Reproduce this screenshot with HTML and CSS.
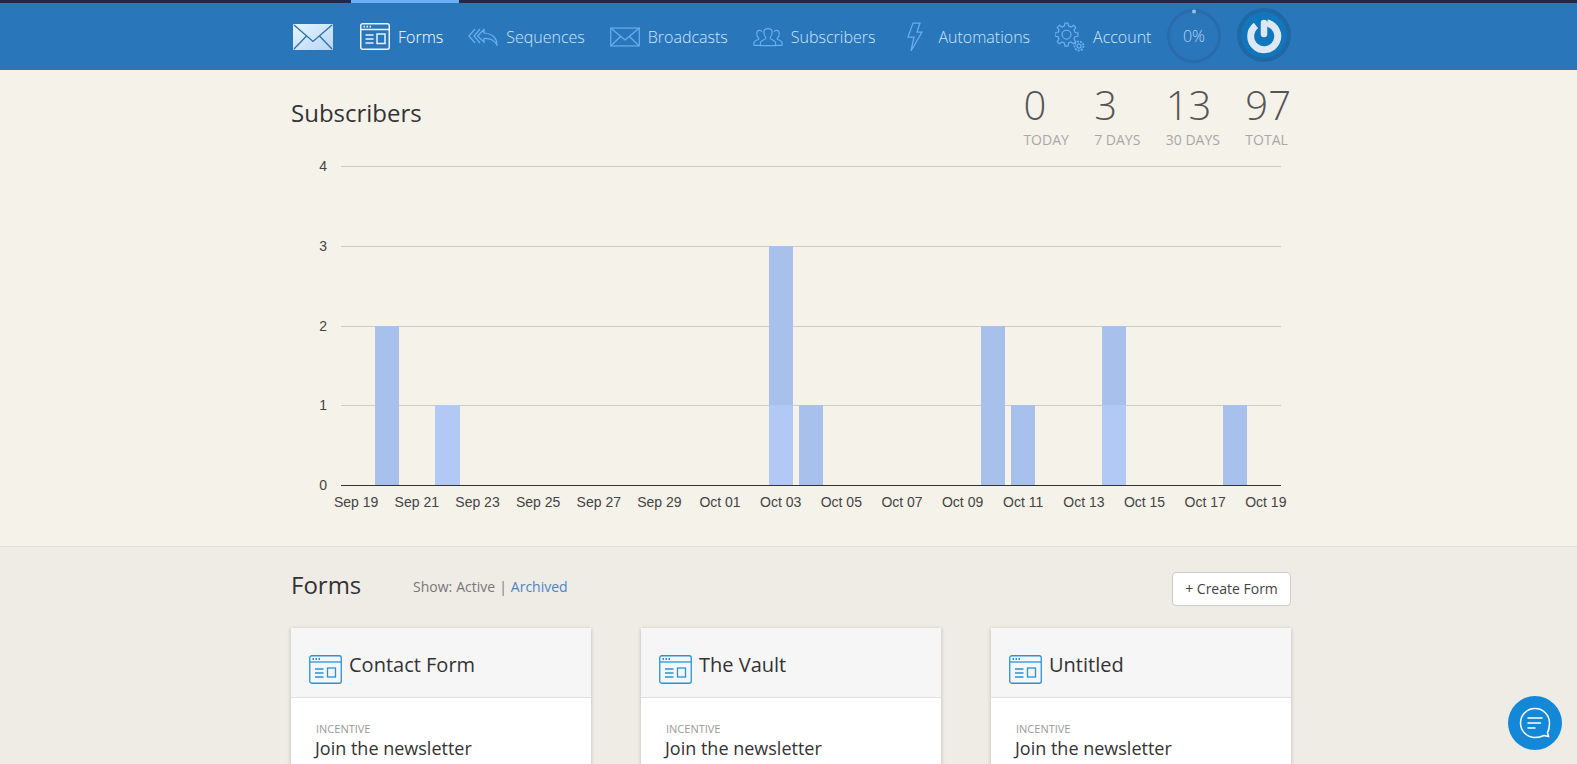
FILE: index.html
```html
<!DOCTYPE html>
<html lang="en">
<head>
<meta charset="utf-8">
<title>Subscribers</title>
<link rel="stylesheet" href="styles.css">
</head>
<body>
<header class="topbar">
  <div class="wrap topbar-row">
    <svg class="logo" viewBox="0 0 40 26" aria-hidden="true">
      <defs><linearGradient id="env" x1="0" y1="0" x2="1" y2="1"><stop offset="0" stop-color="#e4f5ff"/><stop offset="1" stop-color="#b9d6f6"/></linearGradient></defs>
      <rect width="40" height="26" rx="1" fill="url(#env)"/>
      <path d="M1 1 L20 17.5 L39 1 M1 25 L13.5 12 M39 25 L26.5 12" fill="none" stroke="#2f6fa8" stroke-width="1.300"/>
    </svg>
    <nav class="nav">
      <a class="nav-item is-active">
        <span class="nav-icon">
          <svg width="30" height="27" viewBox="0 0 30 27" class="ico-white"><rect x=".75" y=".75" width="28.5" height="25.5" rx="2"/><path d="M1 6.5h28"/><path class="dots" d="M3.500 3.600h1.500M6.500 3.600h1.500M9.500 3.600h1.500"/><path d="M5.500 12h8M5.500 16h8M5.500 20h8"/><rect x="17" y="11" width="8" height="9.500"/></svg>
        </span>Forms</a>
      <a class="nav-item">
        <span class="nav-icon">
          <svg width="30" height="18" viewBox="0 0 30 18" class="ico-blue"><path d="M7 1 L1 8 L7 15 M12 1 L6 8 L12 15 M16 1.500 L9.500 8 L16 14 V10.500 C22 10 26 12 29 17 C29 10 24 5.500 16 5 Z"/></svg>
        </span>Sequences</a>
      <a class="nav-item">
        <span class="nav-icon">
          <svg width="31" height="20" viewBox="0 0 31 20" class="ico-blue"><rect x=".75" y=".75" width="29.500" height="18.500"/><path d="M1 1 L15.500 13 L30 1 M1 19 L11 9.500 M30 19 L20 9.500"/></svg>
        </span>Broadcasts</a>
      <a class="nav-item">
        <span class="nav-icon">
          <svg width="32" height="20" viewBox="0 0 32 20" class="ico-blue"><path d="M8 19 H1 V16 C1 14 4 13.500 6 12.500 V11 C4.500 10 4 8 4 6.500 C4 4 5.500 3 7 3 C8 3 9 3.500 9.500 4.500"/><path d="M24 19 H31 V16 C31 14 28 13.500 26 12.500 V11 C27.500 10 28 8 28 6.500 C28 4 26.500 3 25 3 C24 3 23 3.500 22.500 4.500"/><path d="M8 19.250 H24 V16 C24 14 20 13 18.500 12 V10 C20 9 20.500 7 20.500 5 C20.500 2.500 18.500 1 16 1 C13.500 1 11.500 2.500 11.500 5 C11.500 7 12 9 13.500 10 V12 C12 13 8 14 8 16 Z"/></svg>
        </span>Subscribers</a>
      <a class="nav-item">
        <span class="nav-icon">
          <svg width="16" height="30" viewBox="0 0 16 30" class="ico-blue"><path d="M6 1 H13 L10 10 H15 L4 29 L7 15 H1 Z"/></svg>
        </span>Automations</a>
      <a class="nav-item">
        <span class="nav-icon">
          <svg width="30" height="30" viewBox="0 0 30 30" class="ico-blue"><path d="M10 1 H13 L13.700 4 L16 5 L18.600 3.400 L20.700 5.500 L19 8 L20 10.500 L23 11 V14 L20 14.700 L19 17 L20.700 19.600 L18.600 21.700 L16 20 L13.700 21 L13 24 H10 L9.300 21 L7 20 L4.400 21.700 L2.300 19.600 L4 17 L3 14.700 L0 14 V11 L3 10.500 L4 8 L2.300 5.500 L4.400 3.400 L7 5 L9.300 4 Z"/><circle cx="11.500" cy="12.500" r="4.500"/><circle class="gear-small" cx="24" cy="24" r="4.500"/><circle cx="24" cy="24" r="2"/></svg>
        </span>Account</a>
    </nav>
    <div class="progress">
      <svg class="progress-ring" width="54" height="54" viewBox="0 0 54 54"><circle cx="27" cy="27" r="25.500" class="ring-track"/><circle cx="27" cy="2.500" r="2" class="ring-dot"/></svg>
      <span>0%</span>
    </div>
    <svg class="power" width="54" height="54" viewBox="0 0 54 54" aria-hidden="true">
      <circle cx="27" cy="27" r="25" class="power-bg"/>
      <path d="M30 15 A13.500 13.500 0 1 1 19 17.500" class="power-arc"/>
      <path d="M27 15 V26" class="power-bar"/>
    </svg>
  </div>
</header>

<section class="stats-section">
  <div class="wrap">
    <div class="stats-head">
      <h1 class="title">Subscribers</h1>
      <div class="stats">
        <div class="stat"><div class="stat-num">0</div><div class="stat-label">TODAY</div></div>
        <div class="stat"><div class="stat-num">3</div><div class="stat-label">7 DAYS</div></div>
        <div class="stat"><div class="stat-num">13</div><div class="stat-label">30 DAYS</div></div>
        <div class="stat"><div class="stat-num">97</div><div class="stat-label">TOTAL</div></div>
      </div>
    </div>
    <svg class="chart" width="1000" height="370" viewBox="291 155 1000 370">
      <g class="grid">
        <path d="M341 166.500H1281M341 246.500H1281M341 326.500H1281M341 405.500H1281"/>
      </g>
      <g class="bars-dark">
        <rect x="375" y="326" width="24" height="159"/>
        <rect x="769" y="246" width="24" height="159"/>
        <rect x="799" y="405" width="24" height="80"/>
        <rect x="981" y="326" width="24" height="159"/>
        <rect x="1011" y="405" width="24" height="80"/>
        <rect x="1102" y="326" width="24" height="79"/>
        <rect x="1223" y="405" width="24" height="80"/>
      </g>
      <g class="bars-light">
        <rect x="435" y="405" width="25" height="80"/>
        <rect x="769" y="405" width="24" height="80"/>
        <rect x="1102" y="405" width="24" height="80"/>
      </g>
      <path class="axis" d="M341 485.500H1281"/>
      <g class="y-labels">
        <text x="327" y="171">4</text><text x="327" y="251">3</text><text x="327" y="331">2</text><text x="327" y="410">1</text><text x="327" y="490">0</text>
      </g>
      <g class="x-labels">
        <text x="356.200" y="507">Sep 19</text><text x="416.800" y="507">Sep 21</text><text x="477.500" y="507">Sep 23</text><text x="538.100" y="507">Sep 25</text><text x="598.800" y="507">Sep 27</text><text x="659.400" y="507">Sep 29</text><text x="720" y="507">Oct 01</text><text x="780.700" y="507">Oct 03</text><text x="841.300" y="507">Oct 05</text><text x="902" y="507">Oct 07</text><text x="962.600" y="507">Oct 09</text><text x="1023.200" y="507">Oct 11</text><text x="1083.900" y="507">Oct 13</text><text x="1144.500" y="507">Oct 15</text><text x="1205.200" y="507">Oct 17</text><text x="1265.800" y="507">Oct 19</text>
      </g>
    </svg>
  </div>
</section>

<section class="forms-section">
  <div class="wrap">
    <div class="forms-head">
      <h2 class="title">Forms</h2>
      <p class="filter">Show: Active <span class="sep">|</span> <a class="filter-link">Archived</a></p>
      <a class="btn">+ Create Form</a>
    </div>
    <div class="cards">
      <article class="card">
        <div class="card-head">
          <svg class="ico-form" width="33" height="29" viewBox="0 0 33 29"><rect x=".75" y=".75" width="31.500" height="27.500" rx="2"/><path d="M1 7h31"/><path class="dots" d="M3.500 4h1.500M6.500 4h1.500M9.500 4h1.500"/><path d="M6 14h8.500M6 18h8.500M6 22h8.500"/><rect x="18.500" y="13" width="8" height="9"/></svg>
          <h3>Contact Form</h3>
        </div>
        <div class="card-body"><div class="label">INCENTIVE</div><div class="value">Join the newsletter</div></div>
      </article>
      <article class="card">
        <div class="card-head">
          <svg class="ico-form" width="33" height="29" viewBox="0 0 33 29"><rect x=".75" y=".75" width="31.500" height="27.500" rx="2"/><path d="M1 7h31"/><path class="dots" d="M3.500 4h1.500M6.500 4h1.500M9.500 4h1.500"/><path d="M6 14h8.500M6 18h8.500M6 22h8.500"/><rect x="18.500" y="13" width="8" height="9"/></svg>
          <h3>The Vault</h3>
        </div>
        <div class="card-body"><div class="label">INCENTIVE</div><div class="value">Join the newsletter</div></div>
      </article>
      <article class="card">
        <div class="card-head">
          <svg class="ico-form" width="33" height="29" viewBox="0 0 33 29"><rect x=".75" y=".75" width="31.500" height="27.500" rx="2"/><path d="M1 7h31"/><path class="dots" d="M3.500 4h1.500M6.500 4h1.500M9.500 4h1.500"/><path d="M6 14h8.500M6 18h8.500M6 22h8.500"/><rect x="18.500" y="13" width="8" height="9"/></svg>
          <h3>Untitled</h3>
        </div>
        <div class="card-body"><div class="label">INCENTIVE</div><div class="value">Join the newsletter</div></div>
      </article>
    </div>
  </div>
</section>

<button class="chat" aria-label="Chat">
  <svg width="32" height="32" viewBox="0 0 32 32"><path d="M16 1.500 C8 1.500 1.500 8 1.500 16 C1.500 24 8 30.500 16 30.500 C20 30.500 23 29.500 25 28.500 L29.500 29.500 L28.500 25.500 C30 23 30.500 19.500 30.500 16 C30.500 8 24 1.500 16 1.500 Z"/><path d="M9 11h14M9 16h12.500M9 21h7"/></svg>
</button>
</body>
</html>
```

FILE: styles.css
```css
* { box-sizing: border-box; }
html, body { margin: 0; padding: 0; }
body {
  height: 764px;
  overflow: hidden;
  font-family: "Open Sans", sans-serif;
  background: #efece5;
  color: #333;
}
.wrap { width: 1000px; margin-left: 291px; }

/* top bar */
.topbar {
  height: 70px;
  background: #2a76bb;
  border-top: 3px solid #1f2a44;
}
.topbar-row { display: flex; align-items: stretch; height: 67px; }
.logo { width: 40px; height: 26px; margin: 21px 0 0 2px; flex: none; }
.nav { display: flex; margin-left: 17px; flex: 1; }
.nav-item {
  display: flex;
  align-items: center;
  gap: 8px;
  padding: 0 15px 0 10px;
  font-size: 16px;
  font-weight: 300;
  color: #cfe5fb;
  position: relative;
  white-space: nowrap;
}
.nav-item.is-active { color: #fff; }
.nav-item.is-active::before {
  content: "";
  position: absolute;
  left: 1px; right: -1px; top: -3px;
  height: 3px;
  background: #6cb1f6;
}
.nav-icon { width: 30px; display: flex; justify-content: center; align-items: center; flex: none; }
.ico-white, .ico-white * { fill: none; stroke: #e8f3fd; stroke-width: 1.5; }
.ico-blue, .ico-blue * { fill: none; stroke: #6aaeee; stroke-width: 1.25; }
.ico-blue .gear-small { stroke-width: 1.8; stroke-dasharray: 2 1.1; }
.ico-white .dots { stroke-width: 1.8; }

.progress {
  position: relative;
  width: 54px; height: 54px;
  margin: 6px 0 0 0;
  display: flex; align-items: center; justify-content: center;
  font-size: 16px; font-weight: 300; color: #b5d5f3;
  flex: none;
}
.progress-ring { position: absolute; left: 0; top: 0; }
.ring-track { fill: none; stroke: #2a6bab; stroke-width: 3; }
.ring-dot { fill: #9cc1e3; }
.power { margin: 5px 0 0 16px; flex: none; }
.power-bg { fill: #1176bb; stroke: #1f68a4; stroke-width: 4; }
.power-arc { fill: none; stroke: #dce8f2; stroke-width: 7; }
.power-bar { fill: none; stroke: #dce8f2; stroke-width: 6.5; stroke-linecap: round; }

/* stats */
.stats-section {
  height: 477px;
  background: #f5f2ea;
  border-bottom: 1px solid #e2dfd8;
}
.stats-head { display: flex; justify-content: space-between; align-items: flex-start; height: 85px; }
.title {
  margin: 0;
  font-size: 24px;
  font-weight: 400;
  color: #333;
  line-height: 32px;
}
.stats-head .title { margin-top: 27px; }
.stats { display: flex; gap: 25.4px; padding-top: 10px; }
.stat-num { font-size: 40px; font-weight: 300; color: #555; line-height: 50px; }
.stat-label { font-size: 14px; color: #a8a8a8; line-height: 20px; margin-top: 0; }
.chart { display: block; }
.grid path { fill: none; stroke: #cfccc6; stroke-width: 1; }
.axis { fill: none; stroke: #333; stroke-width: 1; }
.bars-dark rect { fill: #a8c0ec; }
.bars-light rect { fill: #b2c9f5; }
.y-labels text, .x-labels text {
  font-family: "Liberation Sans", Arial, sans-serif;
  font-size: 14px;
  fill: #444;
}
.y-labels text { text-anchor: end; }
.x-labels text { text-anchor: middle; }

/* forms */
.forms-head { display: flex; align-items: center; height: 81px; padding-bottom: 3px; }
.forms-head .title { width: 122px; margin-top: -2px; }
.filter { margin: 0; font-size: 14px; color: #777; flex: 1; word-spacing: .35px; }
.sep { color: #7a7a7a; }
.filter-link { color: #4a86c5; }
.btn {
  width: 119px; height: 34px;
  display: flex; align-items: center; justify-content: center;
  background: #fff;
  border: 1px solid #ccc;
  border-radius: 4px;
  font-size: 14px;
  color: #444;
  margin-top: 5px;
}
.cards { display: grid; grid-template-columns: repeat(3, 300px); gap: 50px; }
.card { background: #fff; box-shadow: 0 1px 4px rgba(0,0,0,.22); }
.card-head {
  height: 70px;
  background: #f6f6f6;
  border-bottom: 1px solid #e2e2e2;
  display: flex; align-items: center; gap: 7px;
  padding: 0 0 0 18px;
}
.card-head h3 { margin: 4px 0 0 0; font-size: 20px; font-weight: 400; color: #333; }
.ico-form { flex: none; margin-top: 14px; }
.ico-form, .ico-form * { fill: none; stroke: #2a92d6; stroke-width: 1.3; }
.ico-form .dots { stroke-width: 1.8; }
.card-body { padding: 23px 24px 40px 25px; height: 160px; }
.label { font-size: 11px; color: #9a9a9a; line-height: 16px; }
.value { font-size: 18px; color: #333; line-height: 24px; margin: -1px 0 0 -1px; }

/* chat launcher */
.chat {
  position: fixed;
  left: 1508px; top: 696px;
  width: 54px; height: 54px;
  border: 0; padding: 0;
  border-radius: 50%;
  background: #1488d8;
  display: flex; align-items: center; justify-content: center;
}
.chat path { fill: none; stroke: #fff; stroke-width: 1.5; stroke-linecap: round; }
```
